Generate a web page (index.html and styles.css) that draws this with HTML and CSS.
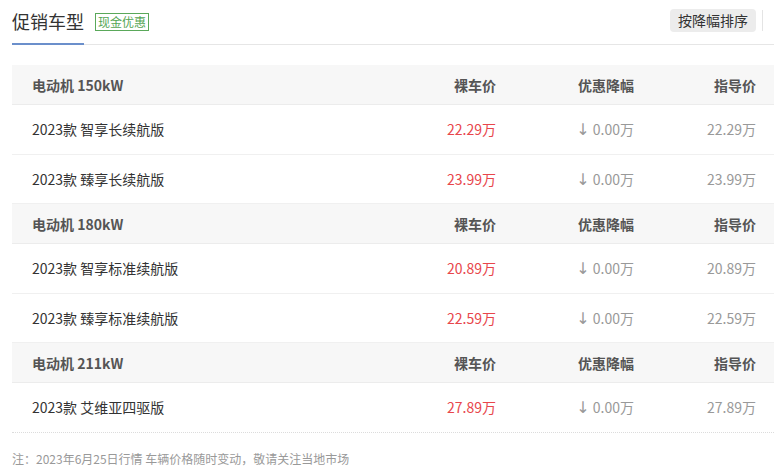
FILE: index.html
```html
<!DOCTYPE html>
<html lang="zh-CN">
<head>
<meta charset="utf-8">
<title>促销车型</title>
<link rel="stylesheet" href="styles.css">
</head>
<body>
<div class="page">
  <div class="head">
    <div class="head-left">
      <h2 class="title">促销车型</h2>
      <span class="badge">现金优惠</span>
    </div>
    <div class="head-right">
      <button class="btn">按降幅排序</button>
      <span class="btn-edge"></span>
    </div>
  </div>

  <div class="table">
    <div class="row group">
      <div class="c name">电动机 150kW</div>
      <div class="c">裸车价</div>
      <div class="c">优惠降幅</div>
      <div class="c">指导价</div>
    </div>
    <div class="row item">
      <div class="c name">2023款 智享长续航版</div>
      <div class="c price">22.29万</div>
      <div class="c off"><span class="arrow">↓</span> 0.00万</div>
      <div class="c guide">22.29万</div>
    </div>
    <div class="row item">
      <div class="c name">2023款 臻享长续航版</div>
      <div class="c price">23.99万</div>
      <div class="c off"><span class="arrow">↓</span> 0.00万</div>
      <div class="c guide">23.99万</div>
    </div>

    <div class="row group">
      <div class="c name">电动机 180kW</div>
      <div class="c">裸车价</div>
      <div class="c">优惠降幅</div>
      <div class="c">指导价</div>
    </div>
    <div class="row item">
      <div class="c name">2023款 智享标准续航版</div>
      <div class="c price">20.89万</div>
      <div class="c off"><span class="arrow">↓</span> 0.00万</div>
      <div class="c guide">20.89万</div>
    </div>
    <div class="row item">
      <div class="c name">2023款 臻享标准续航版</div>
      <div class="c price">22.59万</div>
      <div class="c off"><span class="arrow">↓</span> 0.00万</div>
      <div class="c guide">22.59万</div>
    </div>

    <div class="row group">
      <div class="c name">电动机 211kW</div>
      <div class="c">裸车价</div>
      <div class="c">优惠降幅</div>
      <div class="c">指导价</div>
    </div>
    <div class="row item last">
      <div class="c name">2023款 艾维亚四驱版</div>
      <div class="c price">27.89万</div>
      <div class="c off"><span class="arrow">↓</span> 0.00万</div>
      <div class="c guide">27.89万</div>
    </div>
  </div>

  <p class="note">注：2023年6月25日行情 车辆价格随时变动，敬请关注当地市场</p>
</div>
</body>
</html>
```

FILE: styles.css
```css
* { box-sizing: border-box; }
html, body {
  margin: 0;
  padding: 0;
  background: #fff;
  overflow: hidden;
}
body {
  font-family: "Noto Sans CJK SC", "Noto Sans", sans-serif;
  color: #333;
  width: 774px;
}
.page {
  padding-left: 12px;
}
.head {
  display: flex;
  justify-content: space-between;
  align-items: stretch;
  height: 45px;
  border-bottom: 1px solid #e6e6e6;
}
.head-left {
  display: flex;
  align-items: flex-start;
}
.title {
  margin: 0;
  font-size: 18px;
  font-weight: normal;
  color: #333;
  line-height: 24px;
  padding-top: 9px;
  height: 45px;
  border-bottom: 2px solid #6b8fcb;
}
.badge {
  margin: 13px 0 0 11px;
  border: 1px solid #5aa85a;
  color: #55a655;
  font-size: 12px;
  line-height: 15px;
  padding: 0 2px;
  height: 18px;
}
.head-right {
  display: flex;
  align-items: flex-start;
  gap: 6px;
}
.btn {
  margin-top: 9px;
  font-family: inherit;
  font-size: 14px;
  color: #333;
  background: #ececec;
  border: none;
  border-radius: 4px;
  height: 23px;
  line-height: 23px;
  padding: 0 8px;
  width: 86px;
}
.btn-edge {
  margin-top: 10px;
  width: 12px;
  height: 21px;
  border-left: 1px solid #e4e4e4;
}
.table {
  margin-top: 20px;
}
.row {
  display: grid;
  grid-template-columns: 1fr 120px 138px 122px;
  align-items: center;
  padding: 0 18px 0 20px;
  font-size: 14px;
}
.group {
  height: 40px;
  background: #f7f7f7;
  font-weight: bold;
  color: #555;
  border-bottom: 1px solid #ececec;
}
.item {
  height: 49.5px;
  border-bottom: 1px solid #f0f0f0;
  color: #333;
}
.item.last {
  border-bottom: 1px dotted #dcdcdc;
}
.c {
  text-align: right;
  white-space: nowrap;
}
.c.name {
  text-align: left;
}
.price {
  color: #e8464b;
}
.off, .guide {
  color: #999;
}
.arrow {
  font-family: "DejaVu Sans", sans-serif;
  font-size: 16px;
  line-height: 14px;
  color: #999;
}
.note {
  margin: 18px 0 0;
  font-size: 12px;
  color: #999;
  line-height: 16px;
}
```
